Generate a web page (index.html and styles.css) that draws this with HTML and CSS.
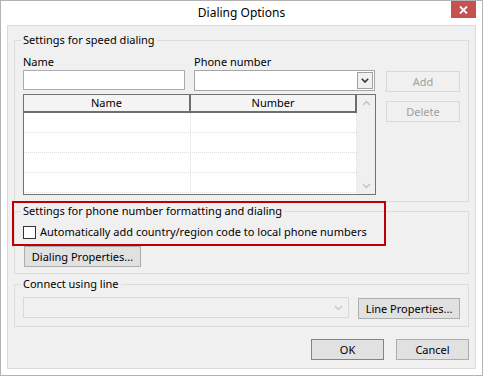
FILE: index.html
```html
<!DOCTYPE html>
<html lang="en">
<head>
<meta charset="utf-8">
<title>Dialing Options</title>
<link rel="stylesheet" href="styles.css">
</head>
<body>
<div class="window">
  <div class="titlebar">
    <span class="tb-spacer"></span>
    <div class="title">Dialing Options</div>
    <div class="close">
      <svg width="9" height="8" viewBox="0 0 9 8"><path d="M1 0.5 L8 7.5 M8 0.5 L1 7.5" stroke="#fff" stroke-width="1.8" fill="none"/></svg>
    </div>
  </div>
  <div class="client">
    <section class="group g1">
      <div class="legend">Settings for speed dialing</div>
      <div class="g1-body">
        <div class="g1-left">
          <div class="fields">
            <div class="field f-name">
              <span class="lbl">Name</span>
              <span class="input"></span>
            </div>
            <div class="field f-phone">
              <span class="lbl">Phone number</span>
              <span class="combo">
                <span class="combo-btn">
                  <svg width="8" height="5" viewBox="0 0 8 5"><path d="M0.8 0.8 L4 4 L7.2 0.8" stroke="#333" stroke-width="1.6" fill="none"/></svg>
                </span>
              </span>
            </div>
          </div>
          <div class="list">
            <div class="list-main">
              <div class="list-head">
                <div class="hcell c1">Name</div>
                <div class="hcell c2">Number</div>
              </div>
              <div class="row"><div class="cell c1"></div><div class="cell c2"></div></div>
              <div class="row"><div class="cell c1"></div><div class="cell c2"></div></div>
              <div class="row"><div class="cell c1"></div><div class="cell c2"></div></div>
              <div class="row"><div class="cell c1"></div><div class="cell c2"></div></div>
            </div>
            <div class="vscroll">
              <svg width="9" height="6" viewBox="0 0 9 6"><path d="M1 5 L4.5 1.5 L8 5" stroke="#c4c4c4" stroke-width="1.5" fill="none"/></svg>
              <svg width="9" height="6" viewBox="0 0 9 6"><path d="M1 1 L4.5 4.5 L8 1" stroke="#c4c4c4" stroke-width="1.5" fill="none"/></svg>
            </div>
          </div>
        </div>
        <div class="g1-right">
          <button class="btn btn-side" disabled>Add</button>
          <button class="btn btn-side" disabled>Delete</button>
        </div>
      </div>
    </section>

    <section class="group g2">
      <div class="legend">Settings for phone number formatting and dialing</div>
      <div class="check-row">
        <span class="checkbox"></span>
        <span class="check-label">Automatically add country/region code to local phone numbers</span>
      </div>
      <button class="btn btn-dialing">Dialing Properties...</button>
    </section>

    <section class="group g3">
      <div class="legend">Connect using line</div>
      <div class="line-row">
        <span class="combo combo-disabled">
          <svg width="9" height="6" viewBox="0 0 9 6"><path d="M1 1 L4.5 4.5 L8 1" stroke="#c8c8c8" stroke-width="1.5" fill="none"/></svg>
        </span>
        <button class="btn btn-line">Line Properties...</button>
      </div>
    </section>

    <div class="footer">
      <button class="btn btn-foot btn-default">OK</button>
      <button class="btn btn-foot">Cancel</button>
    </div>
  </div>
  <div class="highlight"></div>
</div>
</body>
</html>
```

FILE: styles.css
```css
* { box-sizing: border-box; }

html, body {
  margin: 0;
  padding: 0;
  background: #ffffff;
}

body {
  font-family: "Noto Sans", "Open Sans", sans-serif;
  font-size: 11px;
  line-height: 16px;
  color: #000;
}

.window {
  position: relative;
  width: 483px;
  height: 376px;
  background: #ffffff;
  border: 1px solid #b3b3b3;
  padding: 0 6px 6px 6px;
  display: flex;
  flex-direction: column;
}

.titlebar {
  height: 24px;
  display: grid;
  grid-template-columns: 1fr auto 1fr;
  align-items: center;
}

.title {
  font-size: 12px;
  color: #000;
}

.close {
  justify-self: end;
  align-self: start;
  width: 25px;
  height: 17px;
  background: #c75050;
  display: flex;
  align-items: center;
  justify-content: center;
}

.client {
  flex: 1;
  background: #f0f0f0;
  border: 1px solid #dadada;
  padding: 14px 6px 7px 6px;
  display: flex;
  flex-direction: column;
}

.group {
  border: 1px solid #dcdcdc;
  padding: 0 8px 6px 8px;
  display: flex;
  flex-direction: column;
}

.legend {
  align-self: flex-start;
  margin-top: -9px;
  margin-left: -2px;
  padding: 0 2px;
  height: 16px;
  background: #f0f0f0;
  white-space: nowrap;
}

/* group 1 */
.g1-body {
  margin-top: 6px;
  display: flex;
  gap: 10px;
}

.g1-left {
  width: 353px;
  display: flex;
  flex-direction: column;
}

.fields {
  display: flex;
  gap: 9px;
}

.field {
  display: flex;
  flex-direction: column;
}

.lbl {
  height: 16px;
  white-space: nowrap;
}

.f-name { width: 162px; }
.f-phone { width: 181px; }

.input {
  display: block;
  height: 20px;
  background: #fff;
  border: 1px solid #abadb3;
}

.combo {
  display: flex;
  justify-content: flex-end;
  height: 21px;
  background: #fff;
  border: 1px solid #a5a5a5;
  padding: 1px;
}

.combo-btn {
  width: 16px;
  height: 17px;
  border: 1px solid #a0a0a0;
  background: #f0f0f0;
  display: flex;
  align-items: center;
  justify-content: center;
}

.list {
  margin-top: 3px;
  height: 101px;
  border: 1px solid #727272;
  background: #fff;
  display: flex;
}

.list-main {
  width: 333px;
  display: flex;
  flex-direction: column;
}

.list-head {
  display: flex;
  height: 18px;
  background: #f4f4f4;
  border-bottom: 2px solid #6e6e6e;
}

.hcell {
  text-align: center;
  line-height: 16px;
  border-right: 2px solid #6e6e6e;
}

.hcell.c1 { width: 167px; }
.hcell.c2 { width: 166px; }

.row {
  display: flex;
  height: 20px;
  border-bottom: 1px dotted #dedede;
}

.cell { height: 100%; }
.cell.c1 { width: 167px; border-right: 1px dotted #dedede; }
.cell.c2 { width: 166px; border-right: 1px dotted #dedede; }

.vscroll {
  width: 18px;
  background: #f0f0f0;
  display: flex;
  flex-direction: column;
  align-items: center;
  justify-content: space-between;
  padding: 5px 0 5px 0;
}

.g1-right {
  width: 74px;
  padding-top: 17px;
  display: flex;
  flex-direction: column;
  gap: 9px;
}

/* buttons */
.btn {
  font-family: inherit;
  font-size: 11px;
  line-height: 16px;
  color: #000;
  background: #e1e1e1;
  border: 1px solid #adadad;
  border-radius: 0;
  padding: 0;
  height: 21px;
  margin: 0;
  white-space: nowrap;
}

.btn:disabled {
  color: #a0a0a0;
  background: #f0f0f0;
  border-color: #d9d9d9;
}

.btn-side { width: 74px; }

/* group 2 */
.g2 { margin-top: 9px; }

.check-row {
  margin-top: 5px;
  height: 16px;
  display: flex;
  align-items: center;
  gap: 4px;
}

.checkbox {
  width: 13px;
  height: 13px;
  background: #fff;
  border: 1px solid #333;
}

.check-label { white-space: nowrap; }

.btn-dialing {
  margin-top: 6px;
  margin-left: 1px;
  width: 117px;
  align-self: flex-start;
}

/* group 3 */
.g3 {
  margin-top: 10px;
  padding-bottom: 7px;
}

.line-row {
  margin-top: 5px;
  display: flex;
  align-items: flex-start;
  gap: 9px;
}

.combo-disabled {
  width: 326px;
  background: #f0f0f0;
  border-color: #d9d9d9;
  align-items: center;
  padding: 0 5px 0 0;
}

.btn-line {
  margin-top: 1px;
  width: 102px;
}

/* footer */
.footer {
  margin-top: 12px;
  display: flex;
  justify-content: flex-end;
  gap: 12px;
}

.btn-foot { width: 73px; }

.btn-default { border-color: #3c96e6; }

/* annotation overlay */
.highlight {
  position: absolute;
  left: 11px;
  top: 200px;
  width: 374px;
  height: 45px;
  border: 2px solid #c00000;
  pointer-events: none;
}
```
